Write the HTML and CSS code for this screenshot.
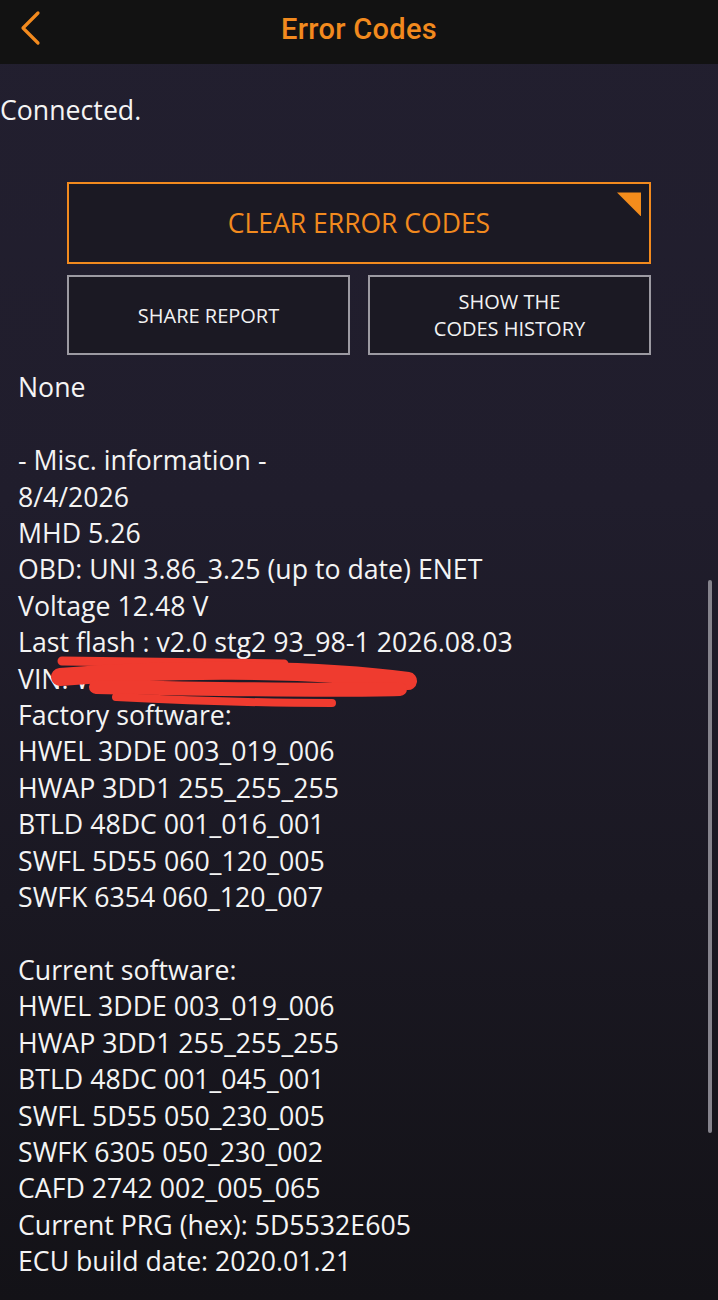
FILE: index.html
```html
<!DOCTYPE html>
<html>
<head>
<meta charset="utf-8">
<link rel="stylesheet" href="styles.css">
</head>
<body>
<div class="app">
  <header class="topbar">
    <svg class="back" width="30" height="40" viewBox="0 0 30 40"><path d="M18 3 L3 18 L18 33" fill="none" stroke="#f28a1e" stroke-width="3.2" stroke-linecap="round" stroke-linejoin="round"/></svg>
    <h1 class="title">Error Codes</h1>
  </header>
  <main class="content">
    <p class="status">Connected.</p>
    <div class="actions">
      <button class="btn btn-primary">CLEAR ERROR CODES<span class="corner"></span></button>
      <div class="btn-row">
        <button class="btn btn-secondary">SHARE REPORT</button>
        <button class="btn btn-secondary">SHOW THE<br>CODES HISTORY</button>
      </div>
    </div>
    <div class="report">
      <div class="line">None</div>
      <div class="line">&nbsp;</div>
      <div class="line">- Misc. information -</div>
      <div class="line">8/4/2026</div>
      <div class="line">MHD 5.26</div>
      <div class="line">OBD: UNI 3.86_3.25 (up to date) ENET</div>
      <div class="line">Voltage 12.48 V</div>
      <div class="line">Last flash : v2.0 stg2 93_98-1 2026.08.03</div>
      <div class="line">VIN: W</div>
      <div class="line">Factory software:</div>
      <div class="line">HWEL 3DDE 003_019_006</div>
      <div class="line">HWAP 3DD1 255_255_255</div>
      <div class="line">BTLD 48DC 001_016_001</div>
      <div class="line">SWFL 5D55 060_120_005</div>
      <div class="line">SWFK 6354 060_120_007</div>
      <div class="line">&nbsp;</div>
      <div class="line">Current software:</div>
      <div class="line">HWEL 3DDE 003_019_006</div>
      <div class="line">HWAP 3DD1 255_255_255</div>
      <div class="line">BTLD 48DC 001_045_001</div>
      <div class="line">SWFL 5D55 050_230_005</div>
      <div class="line">SWFK 6305 050_230_002</div>
      <div class="line">CAFD 2742 002_005_065</div>
      <div class="line">Current PRG (hex): 5D5532E605</div>
      <div class="line">ECU build date: 2020.01.21</div>
      <svg class="redact" width="420" height="70" viewBox="0 0 420 70">
        <g fill="none" stroke="#ef3b2f" stroke-linecap="round">
          <path d="M46 6 L268 9" stroke-width="9"/>
          <path d="M44 22 C140 14 290 12 392 26" stroke-width="18"/>
          <path d="M80 32 C190 34 320 36 384 34" stroke-width="14"/>
          <path d="M100 42 C180 46 260 48 316 48" stroke-width="8"/>
        </g>
      </svg>
    </div>
  </main>
  <div class="scrollbar"></div>
</div>
</body>
</html>
```

FILE: styles.css
```css
* { box-sizing: border-box; }
html, body { margin: 0; padding: 0; }
body {
  width: 718px;
  height: 1300px;
  overflow: hidden;
  background: #131217;
  font-family: "Open Sans", "Liberation Sans", sans-serif;
}
.app {
  position: relative;
  height: 1300px;
  background: linear-gradient(#221f2f 0px, #201d2c 500px, #1a1822 900px, #131217 1300px);
}
.topbar {
  height: 64px;
  background: #121212;
  display: flex;
  align-items: center;
  justify-content: center;
  position: relative;
}
.back {
  position: absolute;
  left: 20px;
  top: 10px;
}
.title {
  margin: 0 0 6px 0;
  font-family: Roboto, "Open Sans", sans-serif;
  font-weight: 500;
  font-size: 29px;
  letter-spacing: 0.3px;
  color: #f28a1e;
}
.content {
  padding-top: 28px;
}
.status {
  margin: 0;
  color: #f4f4f4;
  font-size: 26.7px;
  line-height: 36.4px;
}
.actions {
  margin: 54px 67px 0 67px;
  display: flex;
  flex-direction: column;
  gap: 11px;
}
.btn {
  font-family: "Open Sans", "Liberation Sans", sans-serif;
  background: #1b1923;
  cursor: pointer;
  padding: 0;
}
.btn-primary {
  position: relative;
  height: 82px;
  border: 2px solid #f28a1e;
  color: #f28a1e;
  font-size: 26.5px;
  font-weight: 400;
}
.corner {
  position: absolute;
  top: 8px;
  right: 8px;
  width: 24px;
  height: 24px;
  background: #f48c1c;
  clip-path: polygon(0 0, 100% 0, 100% 100%);
}
.btn-row {
  display: grid;
  grid-template-columns: 1fr 1fr;
  gap: 18px;
}
.btn-secondary {
  height: 80px;
  border: 2px solid #9c9aa2;
  color: #f2f2f2;
  font-size: 20px;
  line-height: 27px;
}
.report {
  position: relative;
  margin-top: 14px;
  padding-left: 18px;
  color: #f4f4f4;
  font-size: 26.7px;
  line-height: 36.4px;
}
.line { white-space: nowrap; }
.redact {
  position: absolute;
  left: 16px;
  top: 286px;
}
.scrollbar {
  position: absolute;
  right: 6px;
  top: 580px;
  width: 4px;
  height: 553px;
  border-radius: 2px;
  background: #85838c;
}
```
